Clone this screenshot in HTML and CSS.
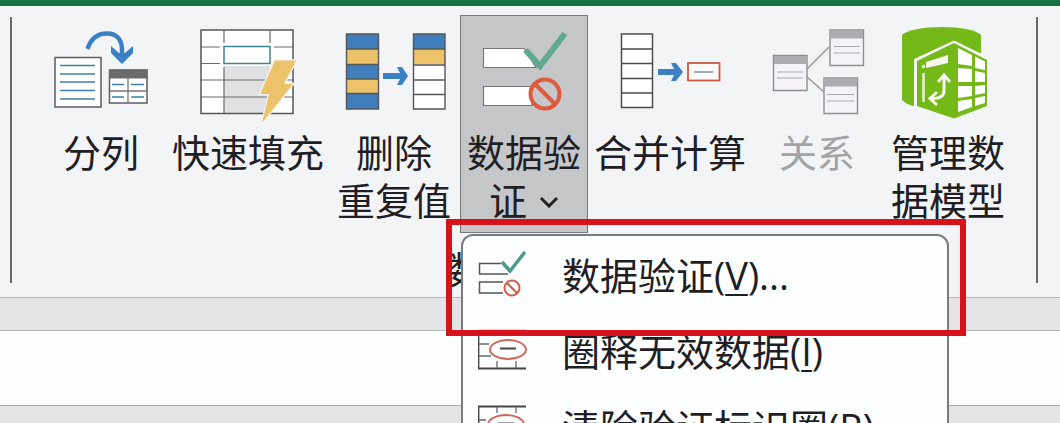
FILE: index.html
```html
<!DOCTYPE html>
<html lang="zh-CN">
<head>
<meta charset="utf-8">
<title>数据工具</title>
<meta name="viewport" content="width=device-width, initial-scale=1">
<link rel="stylesheet" href="styles.css">
</head>
<body>
<div class="titlebar"></div>
<main class="ribbon">
  <div class="separator"></div>
  <section class="group" aria-label="数据工具">
    <div class="tools">
      <button class="tool" type="button">
        <svg class="tool-icon" viewBox="41 20 120 104" fill="none" aria-hidden="true">
          <path d="M87.500 49C91 38 98 33.500 107 33.500C117 33.500 122 40 122 50V56" stroke="#3b7fc4" stroke-width="4.500"/>
          <path d="M111 46L119 53H125L133 46V53L122 64L111 53Z" fill="#3b7fc4"/>
          <rect x="55" y="57.500" width="46" height="49.500" fill="#fff" stroke="#5b5b60" stroke-width="1.500"/>
          <path d="M60 65.500H95M60 74H95M60 82H95M60 90.500H95M60 99H95" stroke="#3f7fa8" stroke-width="1.700"/>
          <rect x="109.500" y="70" width="37.500" height="33" fill="#fff" stroke="#5b5b60" stroke-width="1.500"/>
          <path d="M109 69.500H147.500V78.500H109Z" fill="#6b6a6d"/>
          <path d="M128 78V103M110 91H147" stroke="#77777b" stroke-width="1.300"/>
          <path d="M112 84.500H124M131 84.500H144M112 97H124M131 97H144" stroke="#3f7fa8" stroke-width="1.600"/>
        </svg>
        <span class="label">分列</span>
      </button>
      <button class="tool tool-wide" type="button">
        <svg class="tool-icon" viewBox="188 20 120 104" fill="none" aria-hidden="true">
          <rect x="201" y="30" width="92" height="83.500" fill="#fff"/>
          <path d="M224 66H270V113H224Z" fill="#e0e0e2"/>
          <path d="M201 47H220M274 47H293M201 63.500H220M201 80H293M201 97H293M224 30V43M224 67V113.500M270 30V43" stroke="#6a6a6f" stroke-width="1.200"/>
          <rect x="201" y="30" width="92" height="83.500" stroke="#55555a" stroke-width="1.500"/>
          <rect x="224" y="46.500" width="46" height="17" fill="#fff" stroke="#3e8590" stroke-width="1.500"/>
          <path d="M275 60.500H296L284 84H293L262 123L269 94H260Z" fill="#ecc36b" stroke="#f3f4f6" stroke-width="2.500" paint-order="stroke"/>
        </svg>
        <span class="label">快速填充</span>
      </button>
      <button class="tool" type="button">
        <svg class="tool-icon" viewBox="334 20 120 104" fill="none" aria-hidden="true">
          <path d="M346.500 34H378.500V109H346.500Z" fill="#3f7ebb"/>
          <path d="M346.500 49H378.500V64.500H346.500ZM346.500 79H378.500V93.500H346.500Z" fill="#ecc36b"/>
          <path d="M413.500 34H445V109H413.500Z" fill="#fff"/>
          <path d="M413.500 34H445V49H413.500Z" fill="#3f7ebb"/>
          <path d="M413.500 49H445V64.500H413.500Z" fill="#ecc36b"/>
          <path d="M346.500 34H378.500V109H346.500ZM346.500 49H378.500M346.500 64.500H378.500M346.500 79H378.500M346.500 93.500H378.500M413.500 34H445V109H413.500ZM413.500 49H445M413.500 65H445M413.500 80H445M413.500 94.500H445" stroke="#55565b" stroke-width="1.400"/>
          <path d="M383 73H400L397 67H402L408 76L402 85H397L400 79H383Z" fill="#3b7fc4"/>
        </svg>
        <span class="label">删除<br>重复值</span>
      </button>
      <div class="dropdown">
        <button class="tool tool-active" type="button" aria-haspopup="menu" aria-expanded="true">
          <svg class="tool-icon" viewBox="464 20 120 104" fill="none" aria-hidden="true">
            <path d="M483.500 48.500H524L536 67.500H483.500ZM483.500 86.500H532V105.500H483.500Z" fill="#fff" stroke="#77777b" stroke-width="1.200"/>
            <path d="M525.500 50L540 66L565 33.500" stroke="#62a992" stroke-width="6"/>
            <circle cx="545" cy="94" r="14.500" fill="#c6c7c9" stroke="#de5a3c" stroke-width="4"/>
            <path d="M535 84L555 104" stroke="#de5a3c" stroke-width="4"/>
          </svg>
          <span class="label">数据验<br>证<svg class="chevron" viewBox="0 0 20 12" fill="none" aria-hidden="true"><path d="M2 2L10 10L18 2" stroke="#222" stroke-width="3"/></svg></span>
        </button>
        <div class="menu" role="menu">
          <button class="menu-item" type="button" role="menuitem">
            <svg class="menu-icon" viewBox="478 251 50 48" fill="none" aria-hidden="true">
              <path d="M501 263.500H479.500V274H508M503 282H479.500V293H503" stroke="#55555a" stroke-width="1.500"/>
              <path d="M502 262L510 271L525 252" stroke="#4f9c8c" stroke-width="3.500"/>
              <circle cx="512" cy="288" r="7.500" stroke="#d0604c" stroke-width="2"/>
              <path d="M507 283L517 293" stroke="#d0604c" stroke-width="2"/>
            </svg>
            <span>数据验证(<u>V</u>)...</span>
          </button>
          <button class="menu-item" type="button" role="menuitem">
            <svg class="menu-icon" viewBox="478 326 50 48" fill="none" aria-hidden="true">
              <path d="M478.500 329V367.500H526" stroke="#45454a" stroke-width="1.800"/>
              <path d="M478.500 329.500H526M479 343H489M479 355H491M497 330V335M516 330V335M497 360V367M516 360V367" stroke="#66666b" stroke-width="1.300"/>
              <ellipse cx="508" cy="348.500" rx="18" ry="9.500" stroke="#cf6d5c" stroke-width="2"/>
              <path d="M500 347.500H516" stroke="#45454a" stroke-width="2"/>
            </svg>
            <span>圈释无效数据(<u>I</u>)</span>
          </button>
          <button class="menu-item" type="button" role="menuitem">
            <svg class="menu-icon" viewBox="478 402 50 48" fill="none" aria-hidden="true">
              <path d="M526 405.500H478.500V444" stroke="#45454a" stroke-width="1.800"/>
              <path d="M479 419H486M479 431H488M497 406V412M516 406V412M497 437V444M516 437V444" stroke="#66666b" stroke-width="1.300"/>
              <ellipse cx="506" cy="423.500" rx="18" ry="9.500" stroke="#cf6d5c" stroke-width="2"/>
              <path d="M498 422.500H514" stroke="#45454a" stroke-width="2"/>
            </svg>
            <span>清除验证标识圈(<u>R</u>)</span>
          </button>
        </div>
        <div class="highlight"></div>
      </div>
      <button class="tool tool-wide" type="button">
        <svg class="tool-icon" viewBox="610 20 120 104" fill="none" aria-hidden="true">
          <path d="M621.500 34H652.500V107.500H621.500Z" fill="#fff"/>
          <path d="M621.500 34H652.500V107.500H621.500ZM621.500 49H652.500M621.500 63.500H652.500M621.500 78.500H652.500M621.500 93H652.500" stroke="#4b4b50" stroke-width="1.500"/>
          <path d="M658 69H674L671 63H676L683 72L676 81H671L674 75H658Z" fill="#3b7fc4"/>
          <rect x="688" y="63" width="31.500" height="17.500" fill="#fafafa" stroke="#cb5a41" stroke-width="1.800"/>
          <path d="M694 72H713" stroke="#7795a5" stroke-width="1.500"/>
        </svg>
        <span class="label">合并计算</span>
      </button>
      <button class="tool" type="button" disabled>
        <svg class="tool-icon" viewBox="757 20 120 104" fill="none" aria-hidden="true">
          <path d="M807 69L829 47M807 77L824 92" stroke="#99999d" stroke-width="1.500"/>
          <path d="M773.500 55.500H807V90.500H773.500ZM830 30H863.500V65.500H830ZM824 78H857.500V113.500H824Z" fill="#f5f3f8" stroke="#8e8d92" stroke-width="1.400"/>
          <path d="M774 56H806.500V64H774ZM830.500 30.500H863V38.500H830.500ZM824.500 78.500H857V86.500H824.500Z" fill="#adacb0"/>
          <path d="M777 72H803M777 78H803M834 46.500H860M834 53H860M827 94.500H854M827 101H854" stroke="#aaa9ad" stroke-width="1.200"/>
        </svg>
        <span class="label">关系</span>
      </button>
      <button class="tool" type="button">
        <svg class="tool-icon" viewBox="888 20 120 104" fill="none" aria-hidden="true">
          <path d="M902 35C907 30 923 27 942 27C961 27 976 30 981 35V101L913 106C909 105 905 103 902 100Z" fill="#74b917"/>
          <path d="M914 59L954 40.500L988 57V112L954 121L914 111Z" fill="#f3f4f6"/>
          <path d="M980 53H990V122H950L980 110Z" fill="#f3f4f6"/>
          <path d="M917 61L954 43L987 60V106L954 118.500L917 106Z" fill="#74b917"/>
          <path d="M958 48L972 55V66L958 64ZM975 56.500L985 61.500V70L975 68ZM958 68L972 69V82H958ZM975 71L985 73V82H975ZM958 86H972V96L958 98ZM975 86L985 85V93L975 95ZM958 101L972 99V107L958 112ZM975 98L985 96V103L975 106Z" fill="#fff"/>
          <path d="M926 62L948 55V63L926 68Z" fill="#f5f9ed"/>
          <circle cx="923.500" cy="66.500" r="1.700" fill="#f5f9ed"/>
          <path d="M923.500 73V102" stroke="#e9f3d8" stroke-width="2.500"/>
          <path d="M944 76V91C944 96 940 98.500 932 98.500M938 82L944 75L950 82M937 92L930 98.500L937 105" stroke="#f5f9ed" stroke-width="3"/>
        </svg>
        <span class="label">管理数<br>据模型</span>
      </button>
    </div>
    <h2 class="group-title">数据工具</h2>
  </section>
  <div class="separator"></div>
</main>
<div class="band"></div>
<div class="formula-bar"></div>
<div class="sheet"></div>
</body>
</html>
```
FILE: styles.css
```css
* {
  box-sizing: border-box;
}

body {
  margin: 0;
  height: 100vh;
  overflow: hidden;
  display: flex;
  flex-direction: column;
  background: #fcfdfe;
  color: #1f1e24;
  font: 38px/48px "Open Sans", "Noto Sans CJK SC", sans-serif;
}

button {
  font: inherit;
  color: inherit;
  background: none;
  border: 0;
  padding: 0;
}

.titlebar {
  flex: none;
  height: 6px;
  background: #147340;
}

.ribbon {
  flex: none;
  display: flex;
  padding: 9px 23px 0 10px;
  background: #f3f4f6;
}

.separator {
  flex: none;
  width: 2px;
  margin: 2px 0 14px;
  background: #69696e;
}

.group {
  flex: 1;
  display: flex;
  flex-direction: column;
  gap: 12px;
  padding-bottom: 4px;
}

.tools {
  display: flex;
  gap: 2px;
  padding: 0 24px;
}

.tool {
  flex: none;
  display: flex;
  flex-direction: column;
  align-items: center;
  width: 128px;
  height: 218px;
  padding-top: 4px;
  border: 1px solid transparent;
  white-space: nowrap;
}

.tools > .tool:first-child,
.tool:disabled {
  width: 130px;
}

.tool-wide {
  width: 160px;
}

.tool:disabled {
  color: #a3a3a6;
}

.tool-active {
  background: #c6c7c9;
  border-color: #77787c;
}

.tool-icon {
  flex: none;
  width: 120px;
  height: 104px;
}

.label {
  display: block;
  padding-top: 4px;
}

.chevron {
  width: 20px;
  height: 12px;
  margin-left: 12px;
  vertical-align: 7px;
}

.dropdown {
  position: relative;
  flex: none;
}

.menu {
  position: absolute;
  z-index: 1;
  top: 219px;
  left: 1px;
  width: 488px;
  padding: 1px 0;
  background: #fdfeff;
  border: 2px solid #7b7b7d;
  border-radius: 12px;
}

.menu-item {
  display: flex;
  align-items: center;
  gap: 34px;
  width: 100%;
  height: 76px;
  padding-left: 15px;
  text-align: left;
  white-space: nowrap;
}

.menu-item u {
  text-decoration-thickness: 2px;
  text-underline-offset: 4px;
}

.menu-icon {
  flex: none;
  width: 50px;
  height: 48px;
}

.highlight {
  position: absolute;
  z-index: 2;
  top: 204px;
  left: -14px;
  width: 520px;
  height: 117px;
  border: 6px solid #d8121b;
  pointer-events: none;
}

.group-title {
  margin: 0;
  font-size: 38px;
  font-weight: 400;
  line-height: 48px;
  text-align: center;
}

.band {
  flex: none;
  height: 34px;
  background: #e4e5e7;
  border: solid #b4b6b9;
  border-width: 1px 0;
}

.formula-bar {
  flex: none;
  height: 74px;
  background: #fcfdfe;
}

.sheet {
  flex: 1;
  background: #e4e5e7;
  border-top: 1px solid #a9abae;
}
```
